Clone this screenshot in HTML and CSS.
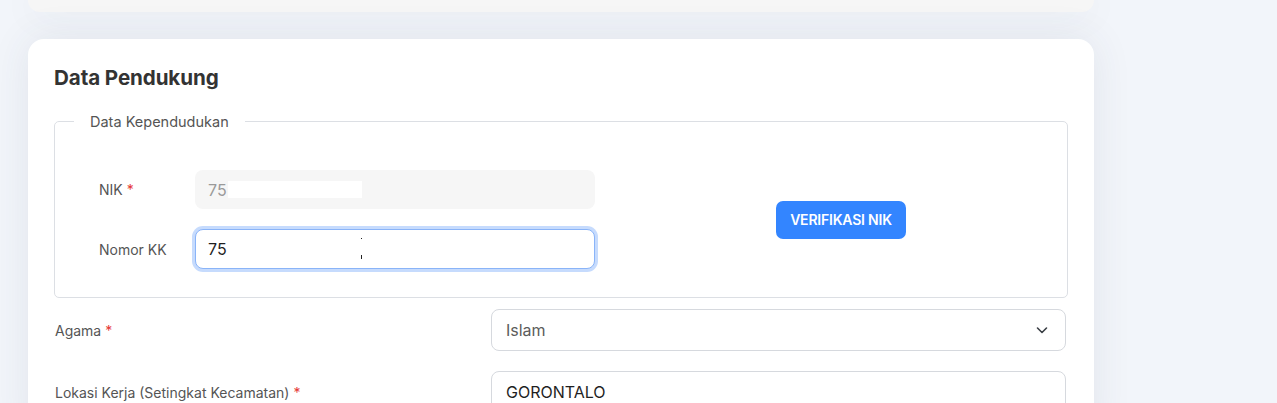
FILE: index.html
```html
<!DOCTYPE html>
<html lang="id">
<head>
<meta charset="utf-8">
<title>Data Pendukung</title>
<link rel="stylesheet" href="styles.css">
</head>
<body>
<div class="page">
  <div class="card card-top"></div>
  <section class="card card-main">
    <h2 class="title">Data Pendukung</h2>
    <fieldset class="group">
      <legend class="legend">Data Kependudukan</legend>
      <div class="group-body">
        <div class="group-fields">
          <div class="frow">
            <label class="flabel">NIK <span class="req">*</span></label>
            <div class="finput disabled"><span class="val-gray">75</span><span class="redact"></span></div>
          </div>
          <div class="frow">
            <label class="flabel">Nomor KK</label>
            <div class="finput focus"><span class="val">75</span><span class="mark mark-a"></span><span class="mark mark-b"></span></div>
          </div>
        </div>
        <div class="group-action">
          <button class="btn">VERIFIKASI NIK</button>
        </div>
      </div>
    </fieldset>
    <div class="row">
      <label class="rlabel">Agama <span class="req">*</span></label>
      <div class="control select">
        <span class="val-muted">Islam</span>
        <svg class="chev" width="14" height="14" viewBox="0 0 14 14"><path d="M2.5 5 L7 9.5 L11.5 5" fill="none" stroke="#3a3f45" stroke-width="1.6" stroke-linecap="round" stroke-linejoin="round"/></svg>
      </div>
    </div>
    <div class="row">
      <label class="rlabel">Lokasi Kerja (Setingkat Kecamatan) <span class="req">*</span></label>
      <div class="control"><span class="val">GORONTALO</span></div>
    </div>
  </section>
</div>
</body>
</html>
```

FILE: styles.css
```css
* { box-sizing: border-box; }
html, body { margin: 0; padding: 0; }
body {
  background: #f2f5fa;
  font-family: "Inter", "Lato", sans-serif;
  width: 1277px;
  height: 403px;
  overflow: hidden;
}
.page {
  padding-left: 28px;
  width: 1094px;
}
.card {
  background: #fff;
  border-radius: 16px;
  box-shadow: 0 0 40px rgba(60, 72, 90, 0.09);
}
.card-top {
  height: 12px;
  background: #f6f6f6;
  border-radius: 0 0 16px 16px;
  margin-bottom: 27px;
}
.card-main {
  padding: 26px 26px 0 26px;
  height: 400px;
}
.title {
  margin: 0;
  font-size: 20.6px;
  line-height: 26px;
  font-weight: 700;
  color: #333;
  letter-spacing: -0.1px;
}
.group {
  margin: 22px 0 0 0;
  padding: 0 0 28px 0;
  border: 1px solid #dcdfe4;
  border-radius: 5px;
  min-width: 0;
}
.legend {
  margin-left: 19px;
  padding: 0 16px;
  font-size: 14.5px;
  color: #555;
}
.group-body {
  display: flex;
  padding-top: 40px;
  padding-left: 44px;
}
.group-fields {
  display: flex;
  flex-direction: column;
  gap: 20px;
}
.frow {
  display: flex;
  align-items: center;
}
.flabel {
  width: 96px;
  font-size: 14px;
  color: #555;
}
.req { color: #e53935; }
.finput {
  position: relative;
  width: 400px;
  height: 40px;
  border-radius: 8px;
  padding: 0 13px;
  display: flex;
  align-items: center;
  font-family: "Inter", sans-serif;
  font-size: 16px;
}
.finput.disabled {
  background: #f6f6f6;
  height: 39px;
}
.finput.focus {
  border: 1px solid #8ab4f8;
  box-shadow: 0 0 0 3px #c6dbfd;
  background: #fff;
  padding-left: 12px;
}
.val-gray { color: #9a9a9a; }
.val { color: #1f1f1f; }
.val-muted { color: #5c5c5c; }
.redact {
  display: inline-block;
  width: 134px;
  height: 17px;
  background: #fff;
  margin-left: 1px;
}
.mark {
  position: absolute;
  left: 165px;
  width: 1px;
  background: #222;
}
.mark-a { top: 8px; height: 1px; }
.mark-b { top: 25px; height: 4px; }
.group-action {
  flex: 1;
  display: flex;
  align-items: center;
  justify-content: center;
  padding-left: 20px;
}
.btn {
  border: none;
  background: #3385ff;
  color: #fff;
  font-family: "Inter", sans-serif;
  font-weight: 600;
  font-size: 14px;
  height: 38px;
  padding: 0 14px;
  border-radius: 7px;
  letter-spacing: -0.2px;
}
.row {
  display: grid;
  grid-template-columns: 436px 575px;
  align-items: center;
  margin-top: 20px;
  padding-left: 1px;
}
.group + .row { margin-top: 11px; }
.rlabel {
  font-size: 14px;
  color: #555;
}
.control {
  height: 42px;
  border: 1px solid #d6d9de;
  border-radius: 8px;
  padding: 0 14px;
  display: flex;
  align-items: center;
  font-family: "Inter", sans-serif;
  font-size: 16px;
}
.select { justify-content: space-between; padding-right: 16px; }
.chev { display: block; }
```
